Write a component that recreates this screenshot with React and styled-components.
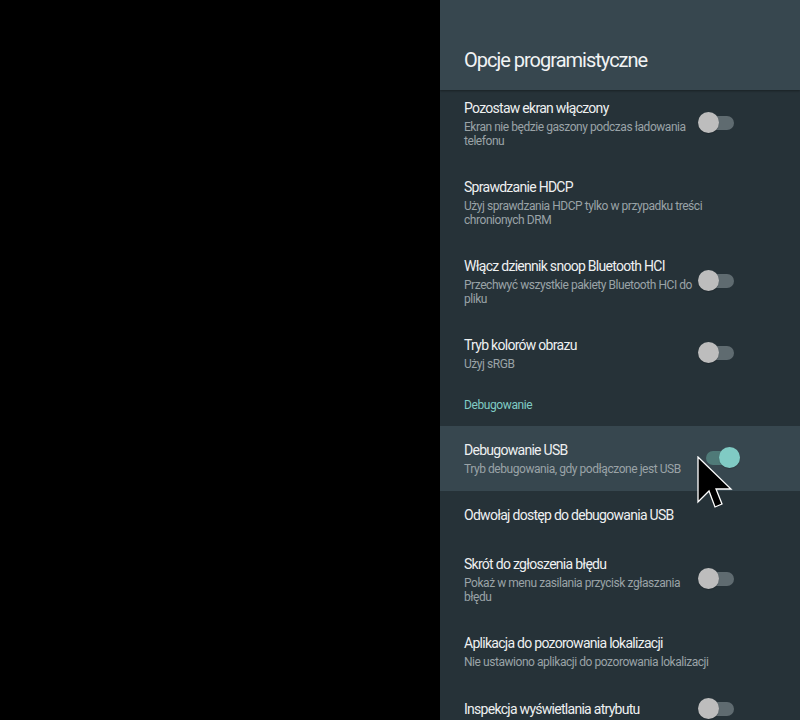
import React from "react";
import styled, { createGlobalStyle } from "styled-components";

const Global = createGlobalStyle`
  html, body { margin: 0; padding: 0; background: #000; }
  body { font-family: Roboto, "Noto Sans", sans-serif; overflow: hidden; }
`;

const Screen = styled.div`
  width: 800px;
  height: 720px;
  display: flex;
  background: #000;
  overflow: hidden;
`;

const Backdrop = styled.div`
  flex: 0 0 440px;
  background: #000;
`;

const Panel = styled.div`
  flex: 1;
  display: flex;
  flex-direction: column;
  background: #263238;
  position: relative;
  overflow: hidden;
`;

const Header = styled.header`
  flex: 0 0 90px;
  height: 90px;
  box-sizing: border-box;
  background: #37474f;
  display: flex;
  align-items: flex-end;
  padding: 0 24px 18px;
  position: relative;
  z-index: 2;
  box-shadow: 0 1px 2px rgba(0, 0, 0, 0.35);
`;

const Title = styled.h1`
  margin: 0;
  font-size: 20px;
  font-weight: 400;
  color: #f1f3f4;
  letter-spacing: -1px;
  line-height: 24px;
`;

const List = styled.div`
  display: flex;
  flex-direction: column;
  margin-top: -6px;
`;

const Row = styled.div`
  display: flex;
  align-items: center;
  padding: 14px 24px 15px;
  background: ${(p) => (p.$focused ? "#37474f" : "transparent")};
`;

const Texts = styled.div`
  flex: 1;
  min-width: 0;
  display: flex;
  flex-direction: column;
  gap: 2px;
`;

const RowTitle = styled.div`
  font-size: 14px;
  line-height: 20px;
  color: #eef0f1;
  letter-spacing: -0.72px;
  white-space: nowrap;
`;

const Summary = styled.div`
  font-size: 12px;
  line-height: 14px;
  color: #9aa3a7;
  max-width: 250px;
  letter-spacing: -0.45px;
`;

const Category = styled.div`
  height: 40px;
  box-sizing: border-box;
  padding: 12px 24px 0;
  font-size: 12px;
  line-height: 14px;
  color: #80cbc4;
  letter-spacing: -0.4px;
`;

const SwitchBox = styled.div`
  flex: 0 0 42px;
  height: 22px;
  position: relative;
  margin-left: -6px;
  margin-right: 36px;
`;

const Track = styled.div`
  position: absolute;
  top: 4px;
  height: 14px;
  border-radius: 7px;
  left: ${(p) => (p.$on ? "8px" : "6px")};
  right: ${(p) => (p.$on ? "0" : "6px")};
  background: ${(p) => (p.$on ? "#4f7a78" : "#5f6b70")};
`;

const Thumb = styled.div`
  position: absolute;
  top: 0;
  width: 21px;
  height: 21px;
  border-radius: 50%;
  left: ${(p) => (p.$on ? "21px" : "0")};
  background: ${(p) => (p.$on ? "#80cbc4" : "#bdbdbd")};
  box-shadow: 0 1px 1px rgba(0, 0, 0, 0.2);
`;

const Cursor = styled.svg`
  position: absolute;
  left: 257px;
  top: 456px;
  z-index: 5;
`;

function Switch({ on }) {
  return (
    <SwitchBox>
      <Track $on={on} />
      <Thumb $on={on} />
    </SwitchBox>
  );
}

const items = [
  { t: "Pozostaw ekran włączony", s: "Ekran nie będzie gaszony podczas ładowania telefonu", sw: false },
  { t: "Sprawdzanie HDCP", s: "Użyj sprawdzania HDCP tylko w przypadku treści chronionych DRM" },
  { t: "Włącz dziennik snoop Bluetooth HCI", s: "Przechwyć wszystkie pakiety Bluetooth HCI do pliku", sw: false },
  { t: "Tryb kolorów obrazu", s: "Użyj sRGB", sw: false },
  { cat: "Debugowanie" },
  { t: "Debugowanie USB", s: "Tryb debugowania, gdy podłączone jest USB", sw: true, focus: true },
  { t: "Odwołaj dostęp do debugowania USB" },
  { t: "Skrót do zgłoszenia błędu", s: "Pokaż w menu zasilania przycisk zgłaszania błędu", sw: false },
  { t: "Aplikacja do pozorowania lokalizacji", s: "Nie ustawiono aplikacji do pozorowania lokalizacji" },
  { t: "Inspekcja wyświetlania atrybutu", sw: false },
];

export default function App() {
  return (
    <>
      <Global />
      <Screen>
        <Backdrop />
        <Panel>
          <Header>
            <Title>Opcje programistyczne</Title>
          </Header>
          <List>
            {items.map((it, i) =>
              it.cat ? (
                <Category key={i}>{it.cat}</Category>
              ) : (
                <Row key={i} $focused={it.focus}>
                  <Texts>
                    <RowTitle>{it.t}</RowTitle>
                    {it.s ? <Summary>{it.s}</Summary> : null}
                  </Texts>
                  {it.sw !== undefined ? <Switch on={it.sw} /> : null}
                </Row>
              )
            )}
          </List>
          <Cursor width="36" height="54" viewBox="0 0 36 54">
            <path
              d="M1 1 L1 46 L12 35 L18 51 L25 48 L19 33 L34 33 Z"
              fill="#000"
              stroke="#fff"
              strokeWidth="1.3"
              strokeLinejoin="miter"
            />
          </Cursor>
        </Panel>
      </Screen>
    </>
  );
}
